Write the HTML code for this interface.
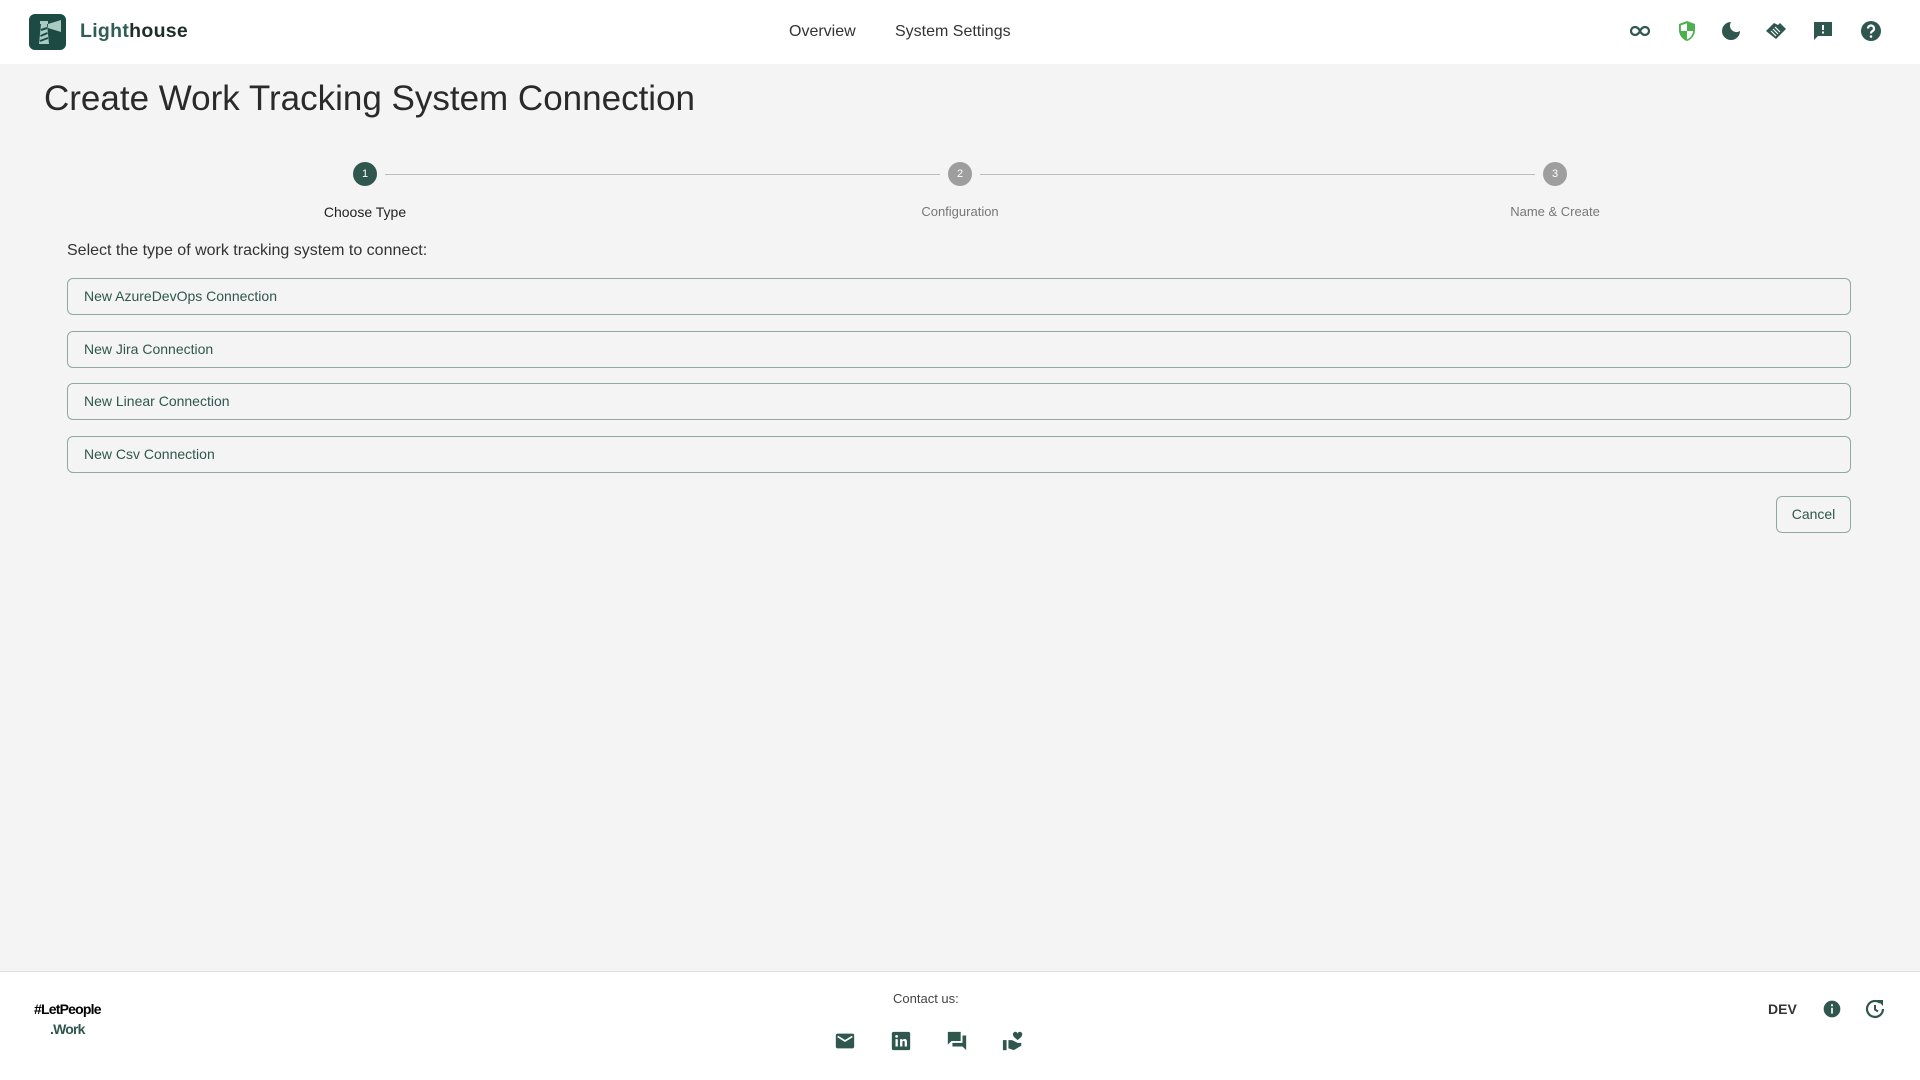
<!DOCTYPE html>
<html><head><meta charset="utf-8"><style>
*{box-sizing:border-box;margin:0;padding:0}
body{width:1920px;height:1080px;background:#f4f4f4;font-family:"Liberation Sans",sans-serif;color:#222;position:relative;overflow:hidden}
.hdr{position:absolute;left:0;top:0;width:1920px;height:64px;background:#fff}
.abs{position:absolute}
.nav{font-size:16px;color:#333;top:23px}
.ico{position:absolute;top:19px;width:24px;height:24px}
.step{position:absolute;top:162px;width:24px;height:24px;border-radius:50%;color:#fff;font-size:11px;text-align:center;line-height:24px}
.lbl{position:absolute;top:204px;font-size:14px;color:#777;transform:translateX(-50%);white-space:nowrap}
.line{position:absolute;top:174px;height:1px;background:#bdbdbd}
.btn{position:absolute;left:67px;width:1784px;height:37px;border:1px solid #8fa9a1;border-radius:6px;font-size:14px;color:#2f574d;padding-left:16px;line-height:35px}
.ft{position:absolute;left:0;top:971px;width:1920px;height:109px;background:#fff;border-top:1px solid #e0e0e0}
</style></head><body>
<div class="hdr">
 <svg class="abs" style="left:29px;top:14px" width="37" height="36" viewBox="0 0 37 36"><rect width="37" height="36" rx="6" fill="#1e4a44"/><path d="M19 10 L32 6 L32 18 L19 14Z" fill="#a9cbc3"/><path d="M10 30 L12 10 L18 10 L20 30Z" fill="#a9cbc3"/><rect x="11" y="7" width="8" height="3" fill="#a9cbc3"/><path d="M12 16 L18 14 M11.5 22 L18.5 19 M11 27 L19 24" stroke="#1e4a44" stroke-width="2"/></svg>
 <div class="abs" style="left:80px;top:20px;font-size:19.5px;font-weight:bold;letter-spacing:0.3px"><span style="color:#2f5e53">Light</span><span style="color:#1f2d2a">house</span></div>
 <div class="abs nav" style="left:789px">Overview</div>
 <div class="abs nav" style="left:895px">System Settings</div>
 <svg class="ico" style="left:1628px" viewBox="0 0 24 24"><path d="M7 8a4 4 0 1 0 0 8c2.5 0 4-2 5-4s2.5-4 5-4a4 4 0 1 1 0 8c-2.5 0-4-2-5-4S9.5 8 7 8z" fill="none" stroke="#2f574d" stroke-width="2.2"/></svg>
 <svg class="ico" style="left:1675px" viewBox="0 0 24 24"><path d="M12 2L4 5v6c0 5 3.4 9.7 8 11 4.6-1.3 8-6 8-11V5z" fill="#4caf50"/><path d="M12 4.2V12H5.9V6.4zM12 12h6.1c-.4 4-2.9 7.3-6.1 8.4z" fill="#fff"/></svg>
 <svg class="ico" style="left:1719px" viewBox="0 0 24 24"><path d="M12 3a9 9 0 1 0 9 9 6.5 6.5 0 0 1-9-9z" fill="#2f574d"/></svg>
 <svg class="ico" style="left:1764px" viewBox="0 0 24 24"><path d="M2 12l8-8 4 2 2-2 6 6-10 10z" fill="#2f574d"/><path d="M7 12l5 5M9 10l5 5M11 8l5 5" stroke="#fff" stroke-width="1.2"/></svg>
 <svg class="ico" style="left:1811px" viewBox="0 0 24 24"><path d="M3 3h18v14H7l-4 4z" fill="#2f574d"/><rect x="11" y="6" width="2" height="5" fill="#fff"/><rect x="11" y="12.5" width="2" height="2" fill="#fff"/></svg>
 <svg class="ico" style="left:1859px" viewBox="0 0 24 24"><circle cx="12" cy="12" r="10" fill="#2f574d"/><path d="M9 9.5a3 3 0 1 1 4.5 2.6c-1 .6-1.5 1.1-1.5 2.4" fill="none" stroke="#fff" stroke-width="2.2"/><circle cx="12" cy="17.5" r="1.3" fill="#fff"/></svg>
</div>
<div class="abs" style="left:44px;top:79px;font-size:35px;font-weight:300;color:#2a2a2a">Create Work Tracking System Connection</div>
<div class="step" style="left:353px;background:#2f574d">1</div>
<div class="step" style="left:948px;background:#9e9e9e">2</div>
<div class="step" style="left:1543px;background:#9e9e9e">3</div>
<div class="line" style="left:385px;width:555px"></div>
<div class="line" style="left:980px;width:555px"></div>
<div class="lbl" style="left:365px;color:#222">Choose Type</div>
<div class="lbl" style="left:960px;font-size:13px">Configuration</div>
<div class="lbl" style="left:1555px;font-size:13px">Name &amp; Create</div>
<div class="abs" style="left:67px;top:242px;font-size:16px;color:#333">Select the type of work tracking system to connect:</div>
<div class="btn" style="top:278px">New AzureDevOps Connection</div>
<div class="btn" style="top:331px">New Jira Connection</div>
<div class="btn" style="top:383px">New Linear Connection</div>
<div class="btn" style="top:436px">New Csv Connection</div>
<div class="abs" style="left:1776px;top:496px;width:75px;height:37px;border:1px solid #8fa9a1;border-radius:6px;font-size:14px;color:#2f574d;text-align:center;line-height:35px">Cancel</div>
<div class="ft">
 <div class="abs" style="left:34px;top:27px;font-size:14px;font-weight:bold;color:#000;letter-spacing:-0.8px;line-height:20px;text-align:center">#LetPeople<br><span style="color:#2f574d">.Work</span></div>
 <div class="abs" style="left:893px;top:19px;font-size:13px;color:#444">Contact us:</div>
 <svg class="abs" style="left:834px;top:58px" width="22" height="22" viewBox="0 0 24 24"><rect x="2" y="4" width="20" height="16" rx="2" fill="#2f574d"/><path d="M4 7l8 5 8-5" fill="none" stroke="#fff" stroke-width="1.8"/></svg>
 <svg class="abs" style="left:890px;top:58px" width="22" height="22" viewBox="0 0 24 24"><rect x="2" y="2" width="20" height="20" rx="2" fill="#2f574d"/><rect x="6" y="10" width="2.5" height="8" fill="#fff"/><circle cx="7.2" cy="7" r="1.5" fill="#fff"/><path d="M11 18v-8h2.4v1.2c.6-1 1.6-1.4 2.6-1.4 2 0 2.5 1.4 2.5 3.2V18H16v-4.5c0-1-.3-1.7-1.2-1.7s-1.3.7-1.3 1.7V18z" fill="#fff"/></svg>
 <svg class="abs" style="left:946px;top:58px" width="22" height="22" viewBox="0 0 24 24"><path d="M2 2h14v10H6l-4 4z" fill="#2f574d"/><path d="M18 6h4v16l-4-4H7v-4h11z" fill="#2f574d"/></svg>
 <svg class="abs" style="left:1002px;top:58px" width="22" height="22" viewBox="0 0 24 24"><rect x="1" y="11" width="4" height="11" fill="#2f574d"/><path d="M7 11h4l6 3h4v3l-8 5-6-2z" fill="#2f574d"/><path d="M17 11c-3-2.5-5-4-5-6a2.5 2.5 0 0 1 5-1 2.5 2.5 0 0 1 5 1c0 2-2 3.5-5 6z" fill="#2f574d"/></svg>
 <div class="abs" style="left:1768px;top:29px;font-size:14px;font-weight:bold;color:#333">DEV</div>
 <svg class="abs" style="left:1822px;top:27px" width="20" height="20" viewBox="0 0 24 24"><circle cx="12" cy="12" r="10" fill="#2f574d"/><rect x="11" y="10.5" width="2" height="7" fill="#fff"/><circle cx="12" cy="7.5" r="1.3" fill="#fff"/></svg>
 <svg class="abs" style="left:1863px;top:25px" width="24" height="24" viewBox="0 0 24 24"><path d="M20 12a8 8 0 1 1-3-6.3" fill="none" stroke="#2f574d" stroke-width="2.2"/><path d="M14 3h6v6z" fill="#2f574d"/><path d="M12 8v4.5l3 2" fill="none" stroke="#2f574d" stroke-width="2"/></svg>
</div>
</body></html>
